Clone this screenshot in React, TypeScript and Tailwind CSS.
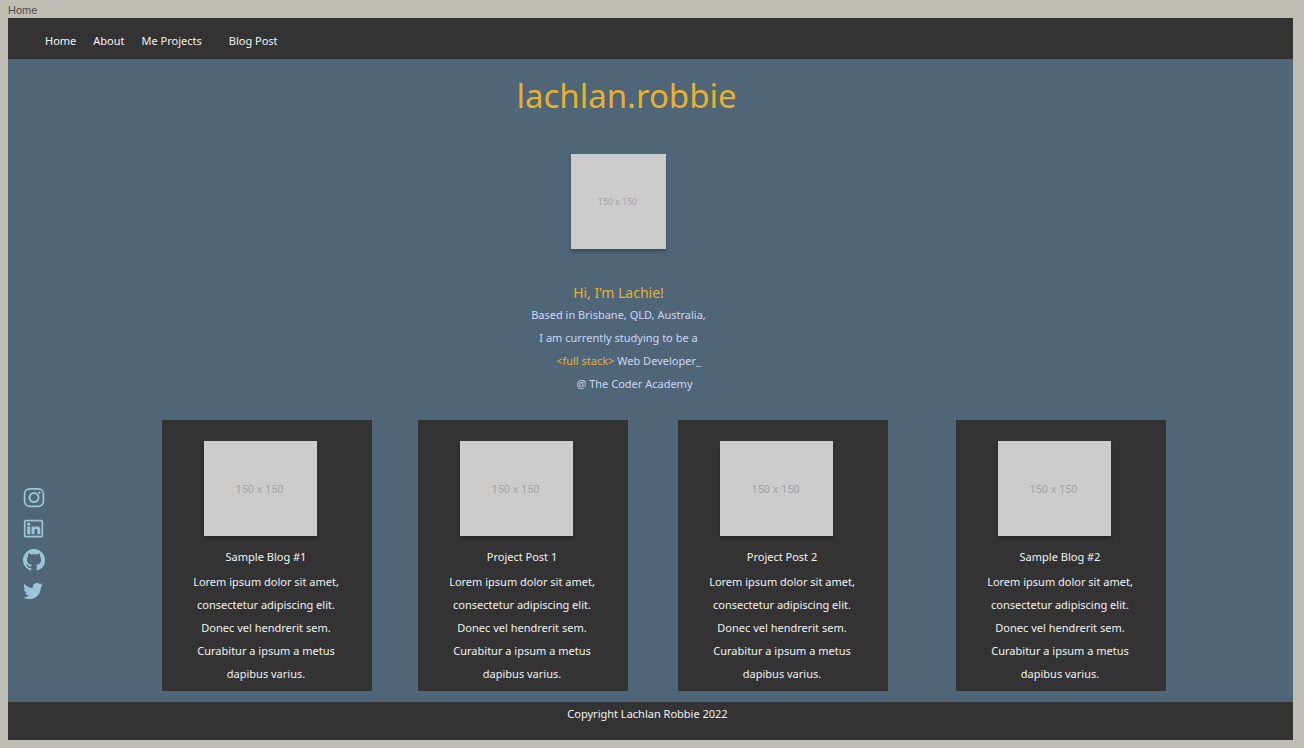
import { FaTwitter } from "react-icons/fa";
import { BsGithub } from "react-icons/bs";

const navLinks = [
  { label: "Home", style: "" },
  { label: "About", style: "ml-[17px]" },
  { label: "Me Projects", style: "ml-[17px]" },
  { label: "Blog Post", style: "ml-[27px]" },
];

function InstagramIcon() {
  return (
    <svg viewBox="0 0 22 22" className="h-[22px] w-[22px]" fill="none" stroke="currentColor" aria-hidden="true">
      <rect x="1.6" y="1.8" width="18.8" height="17.6" rx="5" strokeWidth="1.7" />
      <circle cx="11" cy="10.6" r="4.5" strokeWidth="2" />
      <circle cx="16.3" cy="5.6" r="1.2" fill="currentColor" stroke="none" />
    </svg>
  );
}

function LinkedinIcon() {
  return (
    <svg viewBox="0 0 22 22" className="h-[22px] w-[22px]" fill="currentColor" aria-hidden="true">
      <rect x="1.7" y="2.6" width="17.6" height="16" rx="0.8" fill="none" stroke="currentColor" strokeWidth="1.7" />
      <circle cx="5.7" cy="6.2" r="1.6" />
      <rect x="4.2" y="8.5" width="3" height="7.8" />
      <path d="M8.5 8.5h2.8v1.1c.5-.8 1.4-1.3 2.6-1.3 2.5 0 3.4 1.4 3.4 3.7v4.3h-3v-3.8c0-1.1-.3-1.8-1.2-1.8-1.1 0-1.6.8-1.6 1.8v3.8h-3z" />
    </svg>
  );
}

const socials = [
  { label: "Instagram", icon: <InstagramIcon /> },
  { label: "LinkedIn", icon: <LinkedinIcon /> },
  { label: "GitHub", icon: <BsGithub size={22} /> },
  { label: "Twitter", icon: <FaTwitter size={20} /> },
];

const posts = ["Sample Blog #1", "Project Post 1", "Project Post 2", "Sample Blog #2"];

function Placeholder({ className }: { className: string }) {
  return (
    <div
      className={`flex items-center justify-center bg-[#cccccc] font-['Roboto',sans-serif] text-[#a3a3a3] shadow-[0_3px_3px_rgba(0,0,0,0.25)] ${className}`}
    >
      150 x 150
    </div>
  );
}

function PostCard({ title }: { title: string }) {
  return (
    <article className="w-[210px] bg-[#333333] pt-[21px] pb-1.5 text-center text-[11px] text-[#f2f2f2]">
      <Placeholder className="ml-[42px] h-[95px] w-[113px] pt-1 pr-0.5 text-[11px]" />
      <h2 className="mt-[9px] pr-0.5 leading-6">{title}</h2>
      <p className="pt-px pr-0.5 leading-[23px]">
        Lorem ipsum dolor sit amet,
        <br />
        consectetur adipiscing elit.
        <br />
        Donec vel hendrerit sem.
        <br />
        Curabitur a ipsum a metus
        <br />
        dapibus varius.
      </p>
    </article>
  );
}

export default function App() {
  return (
    <div className="min-h-screen bg-[#c0bdb5] pr-[11px] pb-2 pl-2 font-['Noto_Sans',sans-serif]">
      <div className="pt-0.5 font-['Liberation_Sans',sans-serif] text-[11px] leading-4 text-[#4f4e4b]">Home</div>
      <div className="bg-[#4f6578]">
        <nav className="flex h-[41px] items-center bg-[#333333] pt-1.5 pl-[37px] text-[11px] text-[#f2f2f2]">
          {navLinks.map(({ label, style }) => (
            <a key={label} href="#" className={style}>
              {label}
            </a>
          ))}
        </nav>

        <main>
          <section className="flex flex-col items-center pt-[13px] pr-16 text-center">
            <h1 className="pl-4 text-[33px] leading-[48px] text-[#e9b02d]">lachlan.robbie</h1>
            <Placeholder className="mt-[34px] h-[95px] w-[95px] pt-0.5 pr-0.5 text-[9px]" />
            <h2 className="mt-[34px] text-[14px] leading-5 text-[#e9b02d]">Hi, I’m Lachie!</h2>
            <div className="text-[11px] leading-[23px] text-[#ccd6f6]">
              <p>Based in Brisbane, QLD, Australia,</p>
              <p>I am currently studying to be a</p>
              <p className="pl-5">
                <span className="text-[#e9b02d]">&lt;full stack&gt;</span> Web Developer_
              </p>
              <p className="pl-8">@ The Coder Academy</p>
            </div>
          </section>

          <section className="mt-[25px] grid grid-cols-[154px_1fr_127px] pb-[11px]">
            <ul className="flex flex-col gap-[9px] pt-[67px] pl-[15px] text-[#9dc3d8]">
              {socials.map(({ label, icon }) => (
                <li key={label}>
                  <a href="#" aria-label={label} className="flex h-[22px] w-[22px] items-center">
                    {icon}
                  </a>
                </li>
              ))}
            </ul>
            <div className="grid grid-cols-[256fr_260fr_278fr_210px]">
              {posts.map((title) => (
                <PostCard key={title} title={title} />
              ))}
            </div>
          </section>
        </main>

        <footer className="h-[38px] bg-[#333333] pr-1.5 text-center text-[11px] leading-6 text-[#f2f2f2]">
          Copyright Lachlan Robbie 2022
        </footer>
      </div>
    </div>
  );
}
